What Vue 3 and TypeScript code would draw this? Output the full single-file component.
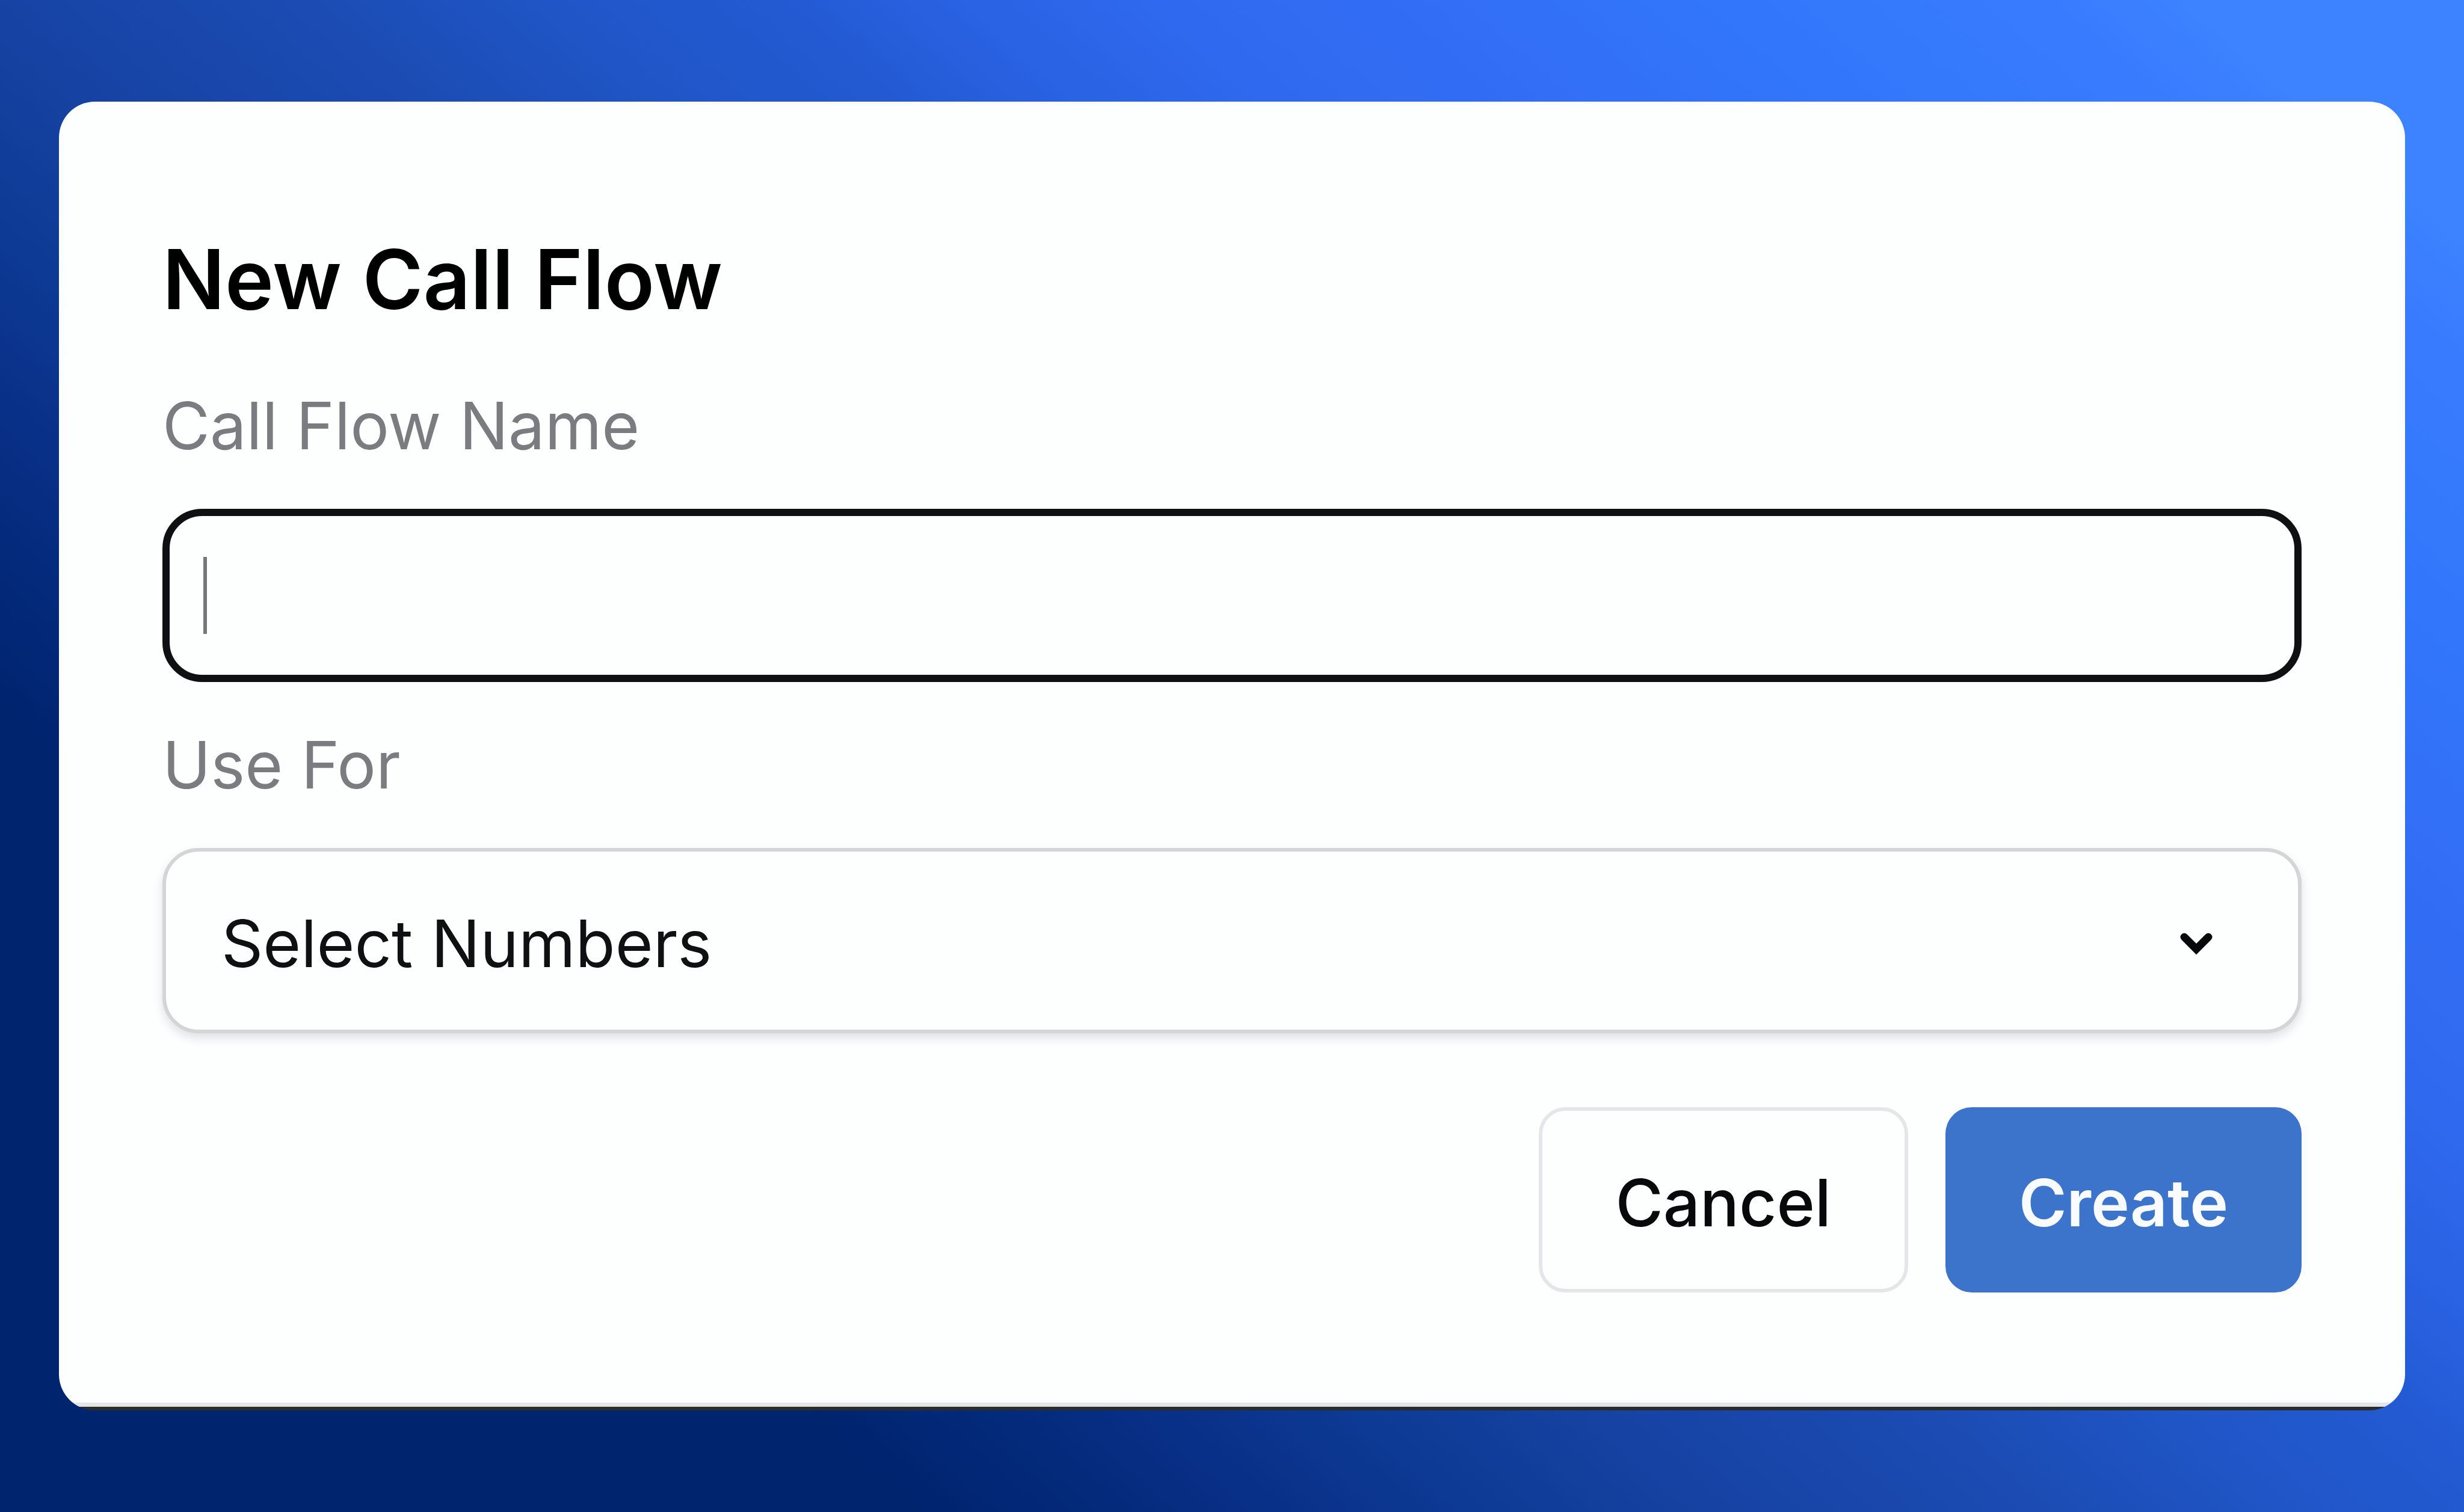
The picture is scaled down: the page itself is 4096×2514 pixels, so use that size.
<script setup lang="ts">
import { ref } from 'vue'

const name = ref('')
const numbers = ref('Select Numbers')
</script>

<template>
  <main class="page">
    <form class="card" @submit.prevent>
      <h1 class="title">New Call Flow</h1>

      <label class="label" for="flow-name">Call Flow Name</label>
      <div class="control">
        <input id="flow-name" v-model="name" class="input" type="text" autocomplete="off" />
        <span v-if="!name" class="caret" aria-hidden="true"></span>
      </div>

      <label class="label spaced" for="flow-numbers">Use For</label>
      <div class="control">
        <select id="flow-numbers" v-model="numbers" class="select">
          <option>Select Numbers</option>
        </select>
        <svg class="chevron" viewBox="0 0 60 48" aria-hidden="true">
          <path d="M10 13 L30 33 L50 13" fill="none" stroke="#08090b" stroke-width="13" stroke-linecap="round" />
        </svg>
      </div>

      <div class="actions">
        <button class="button cancel" type="button">Cancel</button>
        <button class="button create" type="submit">Create</button>
      </div>
    </form>
  </main>
</template>

<style>
body {
  margin: 0;
}
</style>

<style scoped>
.page {
  box-sizing: border-box;
  display: flex;
  min-height: 100vh;
  padding: 169px 98px;
  background: linear-gradient(
    41deg,
    #00246e 22%,
    #03297a 26%,
    #0a318a 31%,
    #0d3a94 35%,
    #1541a1 40%,
    #1b4bb2 48%,
    #2056c8 55%,
    #235ad3 60%,
    #2962e2 64%,
    #2f69ef 69%,
    #326ff6 76%,
    #3277fb 83%,
    #397bfe 90%,
    #3d83ff 94%
  );
  font-family: Inter, "Liberation Sans", sans-serif;
}

.card {
  box-sizing: border-box;
  display: flex;
  flex: 1;
  flex-direction: column;
  padding: 211px 172px 0;
  border-radius: 60px;
  background: linear-gradient(to top, #2b2d2c 6px, #e4e5e7 6px, #e4e5e7 13px, #fdfefe 13px);
}

.title {
  margin: 0 0 94px;
  color: #000;
  font-size: 137px;
  font-weight: 600;
  line-height: 168px;
}

.label {
  color: #7b7c80;
  font-size: 108px;
  line-height: 132px;
}

.spaced {
  margin-top: 72px;
}

.control {
  position: relative;
  display: flex;
  margin-top: 72px;
}

.input,
.select {
  box-sizing: border-box;
  flex: 1;
  min-width: 0;
  margin: 0;
  outline: none;
  background: #fdfefe;
  color: #0f1012;
  font: inherit;
  font-size: 108px;
}

.input {
  height: 288px;
  padding: 0 56px;
  border: 12px solid #0f1012;
  border-radius: 66px;
  caret-color: transparent;
}

.caret {
  position: absolute;
  top: 80px;
  bottom: 80px;
  left: 68px;
  width: 6px;
  background: #767779;
}

.select {
  height: 308px;
  padding: 8px 240px 0 92px;
  border: 6px solid #d4d5d7;
  border-radius: 60px;
  box-shadow: 0 8px 16px rgba(20, 20, 50, 0.12);
  appearance: none;
}

.chevron {
  position: absolute;
  top: 135px;
  right: 145px;
  width: 60px;
  height: 48px;
  pointer-events: none;
}

.actions {
  display: flex;
  justify-content: flex-end;
  gap: 62px;
  margin-top: 123px;
}

.button {
  box-sizing: border-box;
  height: 308px;
  padding: 8px 122px 0;
  border: 0;
  border-radius: 44px;
  font: inherit;
  font-size: 108px;
}

.cancel {
  border: 6px solid #e5e6e8;
  background: #fdfefe;
  color: #08090b;
  font-weight: 500;
}

.create {
  background: #3c74cb;
  color: #f8fbff;
  font-weight: 600;
}
</style>
